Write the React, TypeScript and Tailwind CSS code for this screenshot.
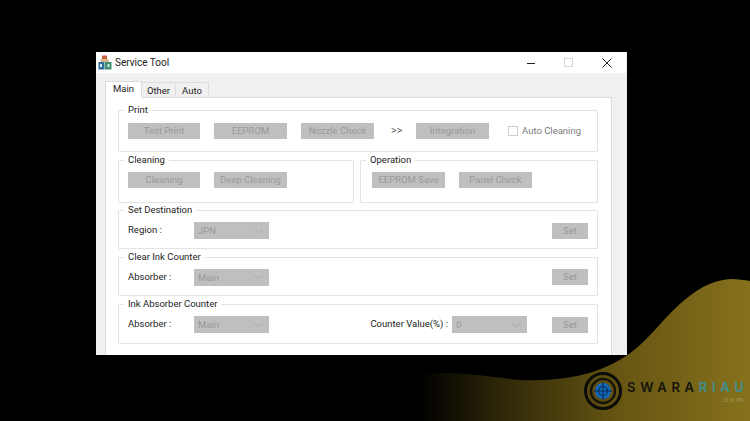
const font = "font-['Roboto',sans-serif]";

const Btn = ({ label, className = "" }: { label: string; className?: string }) => (
  <div className={`h-[16px] bg-[#bfbfbf] text-[#999999] text-[9.5px] leading-[15px] text-center whitespace-nowrap ${className}`}>
    {label}
  </div>
);

const Select = ({ value, className = "" }: { value: string; className?: string }) => (
  <div className={`h-[17px] bg-[#bfbfbf] text-[#999999] text-[9.5px] leading-[15px] pl-[4px] pr-[6px] flex items-center justify-between ${className}`}>
    <span>{value}</span>
    <svg width="9" height="6" viewBox="0 0 9 6" fill="none" stroke="#a8a8a8" strokeWidth="1">
      <path d="M0.5 1 L4.5 5 L8.5 1" />
    </svg>
  </div>
);

const Group = ({ title, className = "", children }: { title: string; className?: string; children: React.ReactNode }) => (
  <div className={`relative border border-[#e3e3e3] rounded-[1px] flex items-center pl-[9px] pr-[9px] ${className}`}>
    <span className="absolute -top-[8px] left-[5px] bg-white px-[4px] text-[9.5px] leading-[14px] text-[#222222] whitespace-nowrap">
      {title}
    </span>
    {children}
  </div>
);

const Label = ({ text, className = "" }: { text: string; className?: string }) => (
  <span className={`text-[9.5px] text-[#222222] whitespace-nowrap ${className}`}>{text}</span>
);

const AppIcon = () => (
  <svg width="14" height="15" viewBox="0 0 14 15" className="ml-[2px] mr-[3px]">
    <rect x="4" y="0.5" width="5" height="5" fill="#c9603a" />
    <rect x="2.5" y="4" width="8" height="3" fill="#d9b48c" />
    <rect x="0.5" y="7" width="6" height="7.5" fill="#2f6f9a" />
    <rect x="7" y="7" width="6.5" height="7.5" fill="#3f8f6a" />
    <rect x="2" y="9" width="2" height="3" fill="#d8e6ee" />
    <rect x="9.5" y="9" width="2" height="3" fill="#d8e6ee" />
  </svg>
);

const Logo = () => (
  <div className="absolute left-[584px] top-[372px] flex items-start">
    <svg width="38" height="38" viewBox="0 0 38 38">
      <circle cx="19" cy="19" r="17.5" fill="none" stroke="#0c0c0a" strokeWidth="3" />
      <circle cx="19" cy="19" r="12" fill="none" stroke="#17150a" strokeWidth="2.5" />
      <circle cx="19" cy="19" r="8" fill="#1268b8" />
      <circle cx="19" cy="19" r="4.5" fill="none" stroke="#0a2a50" strokeWidth="1.2" />
      <path d="M19 10 V28 M10 19 H28" stroke="#0a2a50" strokeWidth="1" />
    </svg>
    <div className="ml-[5px] mt-[7px] flex flex-col items-end">
      <div className="text-[13px] leading-[16px] font-semibold tracking-[4.7px] font-['Inter',sans-serif] whitespace-nowrap">
        <span className="text-[#14130c]">SWARA</span>
        <span className="text-[#3d8f93]">RIAU</span>
      </div>
      <div className="mr-[4px] text-[8px] leading-[10px] tracking-[1.5px] text-[#a59a63]">.com</div>
    </div>
  </div>
);

const App = () => {
  return (
    <div className={`relative w-[750px] h-[421px] overflow-hidden bg-black pt-[52px] ${font}`}>
      {/* wave behind the window */}
      <svg width="750" height="421" viewBox="0 0 750 421" className="absolute left-0 top-0">
        <defs>
          <linearGradient id="wave" x1="420" y1="0" x2="750" y2="0" gradientUnits="userSpaceOnUse">
            <stop offset="0" stopColor="#000000" />
            <stop offset="0.25" stopColor="#2f2809" />
            <stop offset="0.6" stopColor="#665512" />
            <stop offset="1" stopColor="#86711c" />
          </linearGradient>
        </defs>
        <path
          d="M420 375 C450 370 480 376 520 380 C570 382 610 372 640 345 C665 322 690 282 730 279 C738 279 745 280 750 281 V421 H410 Z"
          fill="url(#wave)"
        />
      </svg>

      {/* window */}
      <div className="relative w-[531px] h-[303px] ml-[96px] bg-[#f0f0f0] flex flex-col border-r border-[#e3eeee]">
        <div className="h-[21px] bg-white flex items-center shrink-0">
          <AppIcon />
          <span className="text-[10px] text-[#222222]">Service Tool</span>
          <div className="ml-auto flex items-center mr-[14px]">
            <div className="w-[8px] h-[1px] bg-[#222222] mt-[1px]" />
            <div className="w-[9px] h-[9px] border border-[#d4d4d4] ml-[29px]" />
            <svg width="10" height="10" viewBox="0 0 10 10" className="ml-[29px]" stroke="#222222" strokeWidth="1">
              <path d="M0.5 0.5 L9.5 9.5 M9.5 0.5 L0.5 9.5" />
            </svg>
          </div>
        </div>

        {/* tabs */}
        <div className="h-[24px] shrink-0 flex items-end pl-[9px] text-[9.5px] text-[#222222]">
          <div className="relative z-10 w-[37px] h-[17px] -mb-[1px] bg-white border border-b-0 border-[#dcdcdc] leading-[14px] text-center">Main</div>
          <div className="w-[34px] h-[15px] bg-[#f0f0f0] border-r border-t border-[#dcdcdc] leading-[15px] text-center">Other</div>
          <div className="w-[33px] h-[15px] bg-[#f0f0f0] border-r border-t border-[#dcdcdc] leading-[15px] text-center">Auto</div>
        </div>

        {/* panel */}
        <div className="flex-1 ml-[9px] mr-[14px] bg-white border-t border-l border-r border-[#dcdcdc] pl-[12px] pr-[13px] pt-[12px] flex flex-col">
          <Group title="Print" className="h-[42px]">
            <Btn label="Test Print" className="w-[72px]" />
            <Btn label="EEPROM" className="w-[73px] ml-[14px]" />
            <Btn label="Nozzle Check" className="w-[73px] ml-[14px]" />
            <span className="ml-[17px] w-[25px] text-[11px] font-light text-[#222222] leading-[16px]">&gt;&gt;</span>
            <Btn label="Integration" className="w-[73px]" />
            <div className="w-[10px] h-[10px] border border-[#cfcfcf] ml-[19px] shrink-0" />
            <Label text="Auto Cleaning" className="ml-[4px] !text-[#7a7a7a]" />
          </Group>

          <div className="flex mt-[8px] gap-[6px]">
            <Group title="Cleaning" className="w-[236px] h-[43px] pb-[3px]">
              <Btn label="Cleaning" className="w-[72px]" />
              <Btn label="Deep Cleaning" className="w-[73px] ml-[14px]" />
            </Group>
            <Group title="Operation" className="w-[238px] h-[43px] pb-[3px] !pl-[11px]">
              <Btn label="EEPROM Save" className="w-[73px]" />
              <Btn label="Panel Check" className="w-[73px] ml-[14px]" />
            </Group>
          </div>

          <Group title="Set Destination" className="h-[39px] mt-[7px] pt-[2px]">
            <Label text="Region :" className="w-[66px]" />
            <Select value="JPN" className="w-[75px]" />
            <Btn label="Set" className="w-[36px] ml-auto" />
          </Group>

          <Group title="Clear Ink Counter" className="h-[39px] mt-[8px] pt-[1px]">
            <Label text="Absorber :" className="w-[66px]" />
            <Select value="Main" className="w-[75px]" />
            <Btn label="Set" className="w-[36px] ml-auto" />
          </Group>

          <Group title="Ink Absorber Counter" className="h-[40px] mt-[8px] pt-[1px]">
            <Label text="Absorber :" className="w-[66px]" />
            <Select value="Main" className="w-[75px]" />
            <Label text="Counter Value(%) :" className="ml-auto mr-[4px]" />
            <Select value="0" className="w-[75px]" />
            <Btn label="Set" className="w-[36px] ml-[25px]" />
          </Group>
        </div>
      </div>

      <Logo />
    </div>
  );
};

export default App;
